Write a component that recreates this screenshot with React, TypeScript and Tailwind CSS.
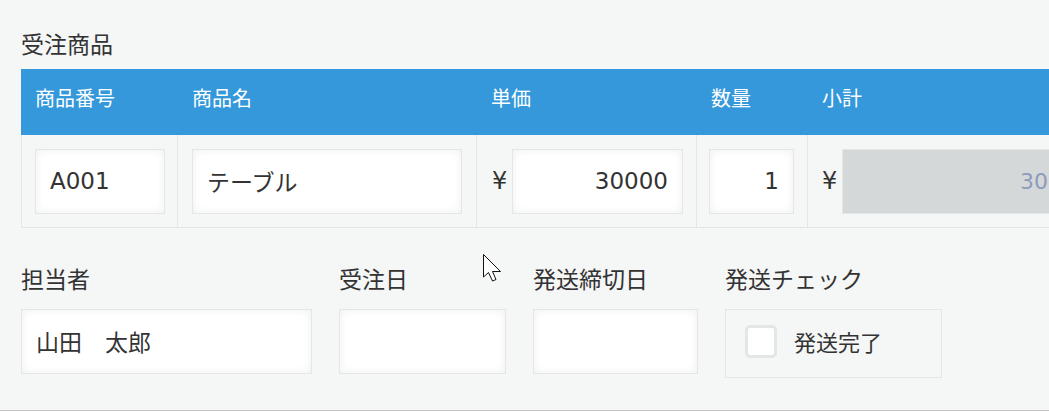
import React from 'react';

const font = { fontFamily: '"Noto Sans CJK JP", "Noto Sans", sans-serif' };
const latin = { fontFamily: '"DejaVu Sans", "Noto Sans CJK JP", sans-serif' };

const inputCls =
  'h-[65px] bg-white border border-[#e3e7e8] shadow-[inset_0_0_8px_rgba(0,0,0,0.07)] px-[14px] flex items-center text-[23px] text-[#333]';

const columns = [
  { label: '商品番号', w: 'w-[157px]' },
  { label: '商品名', w: 'w-[299px]' },
  { label: '単価', w: 'w-[220px]' },
  { label: '数量', w: 'w-[111px]' },
  { label: '小計', w: 'w-[320px]' },
];

const Cursor = () => (
  <svg className="absolute left-[483px] top-[254px]" width="20" height="29" viewBox="0 0 20 29">
    <path
      d="M0.5 0.5 L0.5 23 L5.5 18.5 L9.5 27 L13 25.5 L9.5 17.5 L17.5 17.5 Z"
      fill="#fff"
      stroke="#111"
      strokeWidth="1"
      strokeLinejoin="miter"
    />
  </svg>
);

const Field = ({ label, w, children }: { label: string; w: string; children?: React.ReactNode }) => (
  <div className={`${w} shrink-0 flex flex-col`}>
    <div className="text-[23px] leading-[32px] text-[#333] whitespace-nowrap">{label}</div>
    <div className={`${inputCls} mt-[15px]`}>{children}</div>
  </div>
);

export default function App() {
  return (
    <div
      className="relative w-full h-[411px] overflow-hidden bg-[#f5f6f6] border-b border-[#c4c4c4] pl-[21px] pt-[27px]"
      style={font}
    >
      <div className="text-[23px] leading-[32px] text-[#333]">受注商品</div>

      {/* table */}
      <div className="mt-[10px] w-[1107px]">
        <div className="flex h-[66px] bg-[#3498db]">
          {columns.map((c) => (
            <div key={c.label} className={`${c.w} shrink-0 flex items-center pl-[14px] pb-[8px] text-[20px] text-white`}>
              {c.label}
            </div>
          ))}
        </div>
        <div className="flex h-[93px] border-b border-l border-[#e3e7e8]">
          <div className="w-[156px] shrink-0 flex items-center pl-[13px] border-r border-[#e3e7e8]">
            <div className={`${inputCls} w-[130px] text-[22px]`} style={latin}>A001</div>
          </div>
          <div className="w-[299px] shrink-0 flex items-center pl-[14px] border-r border-[#e3e7e8]">
            <div className={`${inputCls} w-[270px]`}>テーブル</div>
          </div>
          <div className="w-[220px] shrink-0 flex items-center pl-[15px] border-r border-[#e3e7e8]">
            <span className="text-[24px] text-[#333] w-[20px]" style={latin}>¥</span>
            <div className={`${inputCls} w-[171px] justify-end text-[22px]`} style={latin}>30000</div>
          </div>
          <div className="w-[111px] shrink-0 flex items-center pl-[12px] border-r border-[#e3e7e8]">
            <div className={`${inputCls} w-[85px] justify-end text-[22px]`} style={latin}>1</div>
          </div>
          <div className="w-[330px] shrink-0 flex items-center pl-[14px]">
            <span className="text-[24px] text-[#333] w-[20px]" style={latin}>¥</span>
            <div
              className="h-[65px] w-[263px] shrink-0 bg-[#d5d8d9] border border-[#e3e7e8] px-[14px] flex items-center justify-end text-[22px] text-[#8e9bbb]"
              style={latin}
            >
              30000
            </div>
          </div>
        </div>
      </div>

      {/* lower fields */}
      <div className="flex items-start gap-[27px] mt-[34px]">
        <Field label="担当者" w="w-[291px]">山田　太郎</Field>
        <Field label="受注日" w="w-[167px]" />
        <Field label="発送締切日" w="w-[165px]" />
        <div className="w-[217px] shrink-0 flex flex-col">
          <div className="text-[23px] leading-[32px] text-[#333] whitespace-nowrap">発送チェック</div>
          <div className="mt-[15px] h-[69px] border border-[#e3e7e8] flex items-center pl-[19px] pb-[4px]">
            <div className="w-[32px] h-[33px] rounded-[5px] border-[3px] border-[#e4e6e6] bg-white" />
            <span className="ml-[17px] text-[22px] text-[#333]">発送完了</span>
          </div>
        </div>
      </div>

      <Cursor />
    </div>
  );
}
